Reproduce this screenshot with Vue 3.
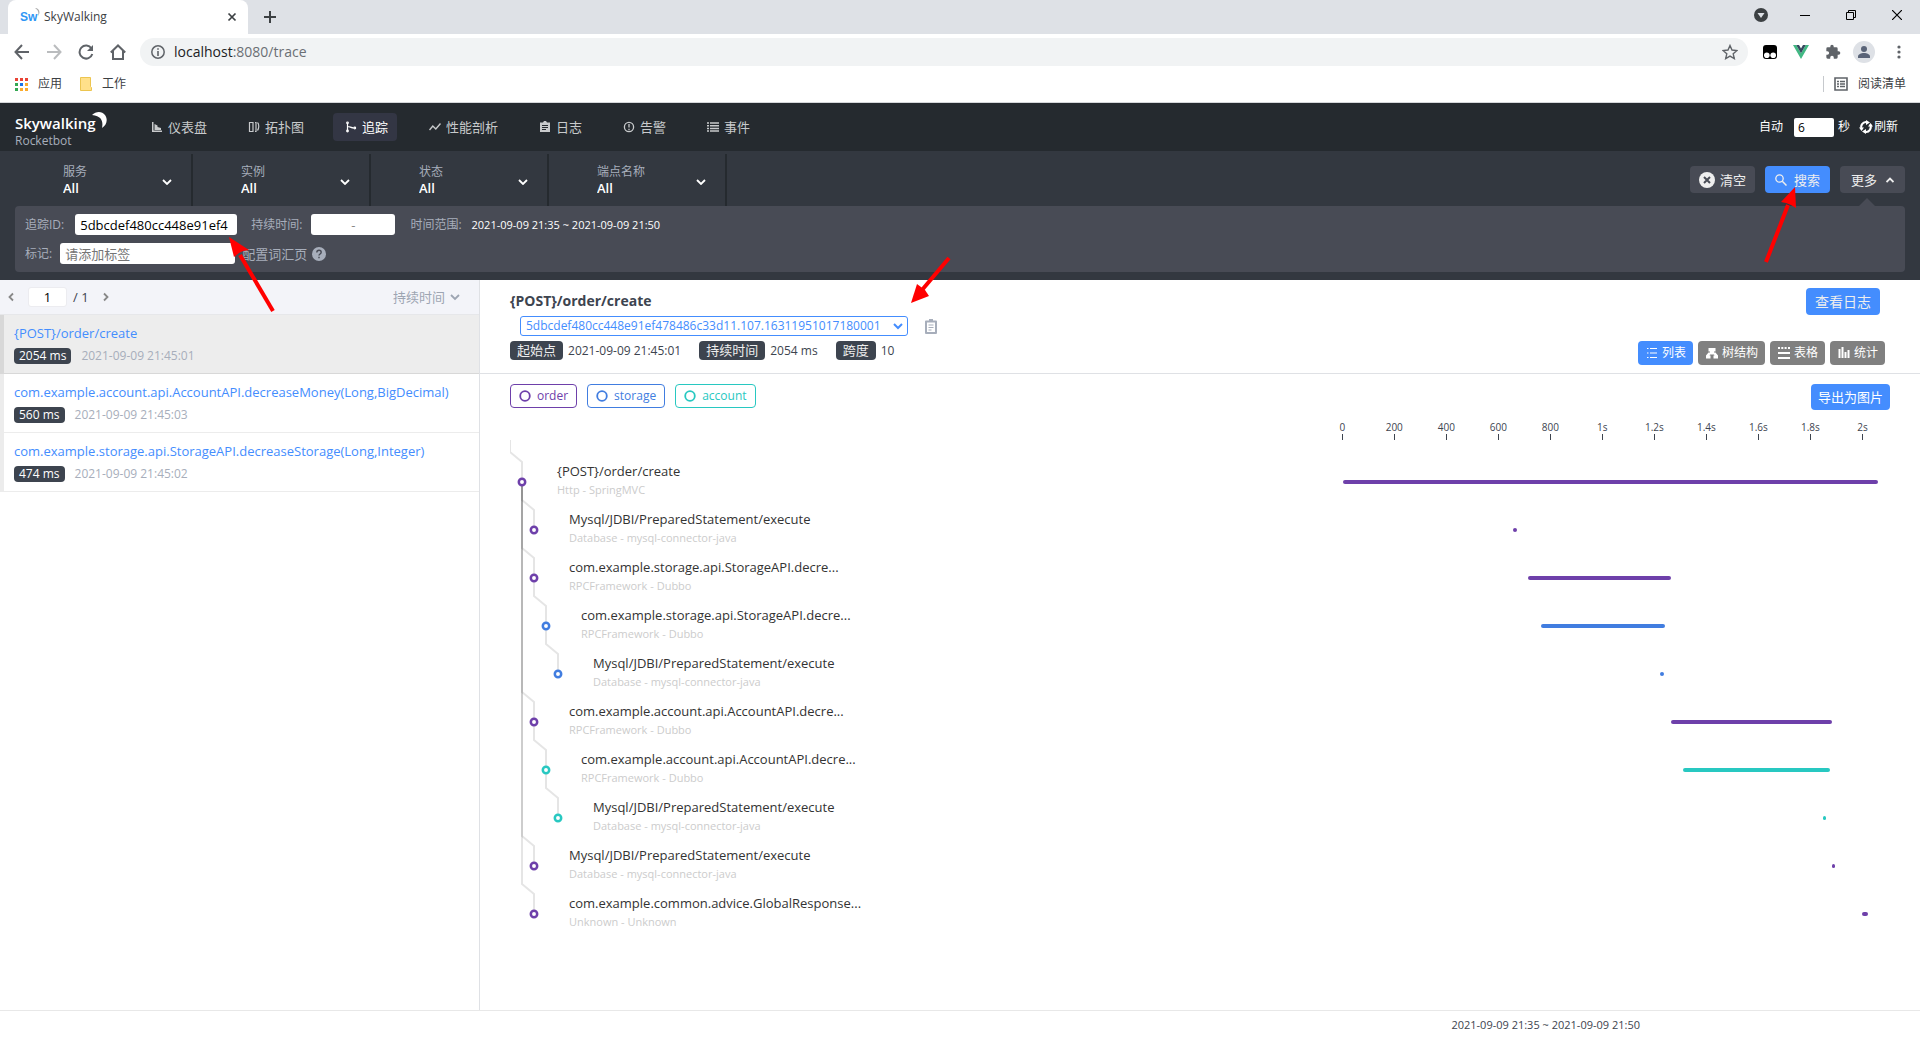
<script setup>
import { ref } from 'vue'

const navItems = [
  { label: '仪表盘', icon: 'chart' },
  { label: '拓扑图', icon: 'topology' },
  { label: '追踪', icon: 'trace', active: true },
  { label: '性能剖析', icon: 'profile' },
  { label: '日志', icon: 'log' },
  { label: '告警', icon: 'alarm' },
  { label: '事件', icon: 'event' },
]
const filters = [
  { id: 'service', label: '服务' },
  { id: 'instance', label: '实例' },
  { id: 'status', label: '状态' },
  { id: 'endpoint', label: '端点名称' },
]
const traces = [
  { name: '{POST}/order/create', ms: 2054, time: '2021-09-09 21:45:01', active: true },
  { name: 'com.example.account.api.AccountAPI.decreaseMoney(Long,BigDecimal)', ms: 560, time: '2021-09-09 21:45:03' },
  { name: 'com.example.storage.api.StorageAPI.decreaseStorage(Long,Integer)', ms: 474, time: '2021-09-09 21:45:02' },
]
const views = [
  { label: '列表', icon: 'list', active: true },
  { label: '树结构', icon: 'tree' },
  { label: '表格', icon: 'table' },
  { label: '统计', icon: 'stats' },
]
const colors = { order: '#6e40aa', storage: '#417de0', account: '#28c8c1' }
const total = 2058
const ticks = ['0', '200', '400', '600', '800', '1s', '1.2s', '1.4s', '1.6s', '1.8s', '2s']
// start and duration in milliseconds; parent is the index of the calling span
const spans = [
  { name: '{POST}/order/create', kind: 'Http - SpringMVC', depth: 0, parent: -1, service: 'order', start: 0, took: 2058 },
  { name: 'Mysql/JDBI/PreparedStatement/execute', kind: 'Database - mysql-connector-java', depth: 1, parent: 0, service: 'order', start: 654, took: 15 },
  { name: 'com.example.storage.api.StorageAPI.decre...', kind: 'RPCFramework - Dubbo', depth: 1, parent: 0, service: 'order', start: 712, took: 551 },
  { name: 'com.example.storage.api.StorageAPI.decre...', kind: 'RPCFramework - Dubbo', depth: 2, parent: 2, service: 'storage', start: 762, took: 477 },
  { name: 'Mysql/JDBI/PreparedStatement/execute', kind: 'Database - mysql-connector-java', depth: 3, parent: 3, service: 'storage', start: 1219, took: 15 },
  { name: 'com.example.account.api.AccountAPI.decre...', kind: 'RPCFramework - Dubbo', depth: 1, parent: 0, service: 'order', start: 1262, took: 620 },
  { name: 'com.example.account.api.AccountAPI.decre...', kind: 'RPCFramework - Dubbo', depth: 2, parent: 5, service: 'account', start: 1308, took: 565 },
  { name: 'Mysql/JDBI/PreparedStatement/execute', kind: 'Database - mysql-connector-java', depth: 3, parent: 6, service: 'account', start: 1846, took: 12 },
  { name: 'Mysql/JDBI/PreparedStatement/execute', kind: 'Database - mysql-connector-java', depth: 1, parent: 0, service: 'order', start: 1881, took: 11 },
  { name: 'com.example.common.advice.GlobalResponse...', kind: 'Unknown - Unknown', depth: 1, parent: 0, service: 'order', start: 1998, took: 22 },
]
const nodeX = (s) => 12 + s.depth * 12
const nodeY = (i) => 42 + i * 48
const edge = (s, i) => {
  const x = nodeX(s)
  const y = nodeY(i)
  const from = s.parent < 0 ? 0 : nodeY(s.parent)
  return `M${x - 12} ${from}V${y - 30}L${x} ${y - 20}V${y}`
}
const pct = (v) => (v / total) * 100 + '%'

const traceId = ref('5dbcdef480cc448e91ef478486c33d11.107.16311951017180001')
const seconds = ref('6')
const page = ref('1')
</script>

<template>
  <div class="window">
    <header class="chrome">
      <div class="tabstrip">
        <div class="tab">
          <span class="favicon">Sw<svg width="5" height="8" viewBox="0 0 5 8"><path d="M0 0c4 0 6 4 3 8 1-4 0-6-3-8z" fill="#aaa" /></svg></span>
          <span class="tab-title">SkyWalking</span>
          <button class="plain" aria-label="Close tab">
            <svg width="10" height="10" viewBox="0 0 10 10"><path d="M1.500 1.500l7 7M8.500 1.500l-7 7" stroke="#3c4043" stroke-width="1.700" /></svg>
          </button>
        </div>
        <button class="plain new-tab" aria-label="New tab">
          <svg width="14" height="14" viewBox="0 0 14 14"><path d="M7 1v12M1 7h12" stroke="#3c4043" stroke-width="2" /></svg>
        </button>
        <div class="win-controls">
          <svg width="14" height="14" viewBox="0 0 14 14"><circle cx="7" cy="7" r="7" fill="#3c4043" /><path d="M3.500 5h7L7 10z" fill="#dee1e6" /></svg>
          <svg width="10" height="10" viewBox="0 0 10 10"><path d="M0 5.500h10" stroke="#000" /></svg>
          <svg width="10" height="10" viewBox="0 0 10 10" fill="none" stroke="#000"><path d="M.5 2.500h7v7h-7zM2.500 2.500v-2h7v7h-2" /></svg>
          <svg width="10" height="10" viewBox="0 0 10 10"><path d="M0 0l10 10M10 0L0 10" stroke="#000" stroke-width="1.200" /></svg>
        </div>
      </div>
      <div class="toolbar">
        <div class="nav-buttons">
          <svg width="16" height="16" viewBox="0 0 16 16" fill="none" stroke="#5f6368" stroke-width="2"><path d="M15 8H2M8 1L1.500 8 8 15" /></svg>
          <svg width="16" height="16" viewBox="0 0 16 16" fill="none" stroke="#babcbe" stroke-width="2"><path d="M1 8h13M8 1l6.500 7L8 15" /></svg>
          <svg width="16" height="16" viewBox="0 0 16 16"><path d="M13.500 4.500A6.500 6.500 0 1 0 14.300 10" fill="none" stroke="#5f6368" stroke-width="2" /><path d="M15 1v6H9z" fill="#5f6368" /></svg>
          <svg width="16" height="16" viewBox="0 0 16 16" fill="none" stroke="#5f6368" stroke-width="2"><path d="M0.800 8.500L8 1.500l7.200 7M3 7v8h10V7" /></svg>
        </div>
        <div class="omnibox">
          <svg width="14" height="14" viewBox="0 0 14 14"><circle cx="7" cy="7" r="6.200" fill="none" stroke="#5f6368" stroke-width="1.500" /><path d="M7 6v5M7 3.200v1.600" stroke="#5f6368" stroke-width="1.600" /></svg>
          <span class="url"><b>localhost</b>:8080/trace</span>
          <svg width="16" height="16" viewBox="0 0 16 16"><path d="M8 1.500l2 4.500 5 .5-3.800 3.300 1.100 4.800L8 12.100l-4.300 2.500 1.100-4.800L1 6.500 6 6z" fill="none" stroke="#5f6368" stroke-width="1.400" /></svg>
        </div>
        <div class="extensions">
          <svg width="14" height="14" viewBox="0 0 14 14"><rect width="14" height="14" rx="3" /><circle cx="3.800" cy="10.200" r="2.800" fill="#fff" /><circle cx="10.200" cy="10.200" r="2.800" fill="#fff" /></svg>
          <svg width="16" height="14" viewBox="0 0 16 14"><path d="M0 0h3.200L8 8.300 12.800 0H16L8 14z" fill="#41b883" /><path d="M3.200 0H6l2 3.500L10 0h2.800L8 8.300z" fill="#35495e" /></svg>
          <svg width="16" height="16" viewBox="0 0 24 24"><path d="M20.500 11H19V7a2 2 0 0 0-2-2h-4V3.500a2.500 2.500 0 0 0-5 0V5H4a2 2 0 0 0-2 2v3.800h1.500a2.700 2.700 0 0 1 0 5.400H2V20a2 2 0 0 0 2 2h3.800v-1.500a2.700 2.700 0 0 1 5.400 0V22H17a2 2 0 0 0 2-2v-4h1.500a2.500 2.500 0 0 0 0-5z" fill="#5f6368" /></svg>
          <svg class="avatar" width="22" height="22" viewBox="0 0 22 22"><circle cx="11" cy="11" r="11" fill="#dee1e6" /><circle cx="11" cy="8" r="3" fill="#5a6478" /><path d="M5 17v-1.500c0-2.300 3-3.500 6-3.500s6 1.200 6 3.500V17z" fill="#5a6478" /></svg>
          <svg width="4" height="14" viewBox="0 0 4 14" fill="#5f6368"><circle cx="2" cy="2" r="1.600" /><circle cx="2" cy="7" r="1.600" /><circle cx="2" cy="12" r="1.600" /></svg>
        </div>
      </div>
      <div class="bookmarks">
        <svg width="13" height="13" viewBox="0 0 13 13"><path d="M0 0h3v3H0zM5 0h3v3H5zM10 0h3v3h-3z" fill="#e94335" /><path d="M0 5h3v3H0zM0 10h3v3H0z" fill="#34a853" /><path d="M5 5h3v3H5z" fill="#1a73e8" /><path d="M10 5h3v3h-3zM5 10h3v3H5zM10 10h3v3h-3z" fill="#fbab2c" /></svg>
        <a href="#">应用</a>
        <svg class="folder" width="12" height="14" viewBox="0 0 12 14"><path d="M.5.5h10v9l1 1v3H.5z" fill="#ffe08a" stroke="#ecc550" /></svg>
        <a href="#">工作</a>
        <span class="bookmark-sep"></span>
        <svg width="14" height="14" viewBox="0 0 14 14"><path d="M1 1h12v12H1z" fill="none" stroke="#5f6368" stroke-width="1.600" /><path d="M3 4.500h2M6 4.500h5M3 7h2M6 7h5M3 9.500h2M6 9.500h5" stroke="#5f6368" stroke-width="1.400" /></svg>
        <a href="#">阅读清单</a>
      </div>
    </header>

    <div class="app-header">
      <div class="brand">
        <span class="brand-name">Skywalking<svg class="moon" width="15" height="17" viewBox="0 0 15 17"><path d="M0 3C4-1 10-1 13 3c3 4 2 10-3 13 1-5 1-12-10-13z" fill="#fff" /></svg></span>
        <span class="brand-sub">Rocketbot</span>
      </div>
      <nav class="main-nav">
        <a v-for="n in navItems" :key="n.label" href="#" :class="{ active: n.active }">
          <svg width="12" height="12" viewBox="0 0 12 12" fill="none" stroke="currentColor">
            <path v-if="n.icon === 'chart'" d="M1 1v10h10V9.500H2.500V1zM3.500 9V3l3 1.500V6l3.500 1v2z" fill="currentColor" stroke="none" />
            <path v-else-if="n.icon === 'topology'" d="M1.500 1.500h3.500v9H1.500zM7 1.500h1v9H7M9.500 1.500c1.700 1.500 1.700 6 0 8" stroke-width="1.200" />
            <g v-else-if="n.icon === 'trace'" stroke-width="1.200"><path d="M2.500 2v8.500M3 5.500c2 0 3 1.500 6 1.500" /><circle cx="2.500" cy="1.800" r="0.800" /><circle cx="2.500" cy="10" r="0.800" /><circle cx="9.800" cy="7" r="0.800" /></g>
            <path v-else-if="n.icon === 'profile'" d="M.5 9l3.300-4 3 3 4.700-5.500" stroke-width="1.400" />
            <g v-else-if="n.icon === 'log'"><path d="M1 1.500h3L5 0h2l1 1.500h3V11H1z" fill="currentColor" stroke="none" /><path d="M3 4.500h6M3 6.500h6M3 8.500h4" stroke="#252a2f" /></g>
            <g v-else-if="n.icon === 'alarm'" stroke-width="1.300"><circle cx="6" cy="6" r="4.600" /><path d="M6 3v3.500M6 7.800v1.400" /></g>
            <path v-else d="M0 2h2M3 2h9M0 4.700h2M3 4.700h9M0 7.400h2M3 7.400h9M0 10h2M3 10h9" stroke-width="1.500" />
          </svg>
          {{ n.label }}
        </a>
      </nav>
      <div class="auto">
        <label for="auto-seconds">自动</label>
        <input id="auto-seconds" v-model="seconds" />
        <span class="unit">秒</span>
        <button class="plain refresh">
          <svg width="14" height="14" viewBox="0 0 14 14"><path d="M3 9.500A4.800 4.800 0 0 1 8 2.200M11 4.500a4.800 4.800 0 0 1-5 7.300" fill="none" stroke="#fff" stroke-width="2" /><path d="M7 0l4 2.500L7 5zM7 14l-4-2.500L7 9zM0 7.500h5l-2.500 3.500zM14 6.500H9L11.500 3z" fill="#fff" /></svg>刷新
        </button>
      </div>
    </div>

    <section class="conditions">
      <div class="filter-row">
        <div v-for="f in filters" :key="f.id" class="filter">
          <label :for="f.id">{{ f.label }}</label>
          <select :id="f.id"><option>All</option></select>
          <svg class="filter-chevron" width="10" height="6" viewBox="0 0 10 6"><path d="M1 1l4 4 4-4" fill="none" stroke="#fff" stroke-width="1.800" /></svg>
        </div>
        <div class="actions">
          <button>
            <svg width="16" height="16" viewBox="0 0 16 16"><circle cx="8" cy="8" r="8" fill="#eee" /><path d="M5 5l6 6M11 5l-6 6" stroke="#484b55" stroke-width="2" /></svg>清空
          </button>
          <div class="pointed">
            <button class="primary">
              <svg width="12" height="12" viewBox="0 0 12 12" fill="none" stroke="#eee"><circle cx="4.500" cy="4.500" r="3.700" stroke-width="1.300" /><path d="M7.300 7.300L11.500 11.500" stroke-width="1.500" /></svg>搜索
            </button>
            <svg class="arrow arrow-search" width="44" height="80" viewBox="0 0 44 80"><path d="M7 76L29 19" stroke="#f00" stroke-width="4" /><path d="M36 1L22 16l5 1 5 2 5 3z" fill="#f00" /></svg>
          </div>
          <div class="pointed">
            <button>更多<svg width="8" height="6" viewBox="0 0 8 6"><path d="M.5 5L4 1.500 7.500 5" fill="none" stroke="#eee" stroke-width="1.800" /></svg></button>
            <span class="notch"></span>
          </div>
        </div>
      </div>
      <div class="more-panel">
        <div class="more-row">
          <label for="trace-id">追踪ID:</label>
          <div class="pointed">
            <input id="trace-id" class="trace-id" value="5dbcdef480cc448e91ef4" />
            <svg class="arrow arrow-id" width="50" height="80" viewBox="0 0 50 80"><path d="M45 75L12 19" stroke="#f00" stroke-width="4" /><path d="M1 1l5 20 5-4 4-2 6-1z" fill="#f00" /></svg>
          </div>
          <label for="duration">持续时间:</label>
          <input id="duration" class="duration" value="-" />
          <span class="range-label">时间范围:</span>
          <span class="range">2021-09-09 21:35 ~ 2021-09-09 21:50</span>
        </div>
        <div class="more-row second">
          <label for="tags">标记:</label>
          <input id="tags" class="tags" placeholder="请添加标签" />
          <a href="#">配置词汇页</a>
          <svg width="14" height="14" viewBox="0 0 14 14"><circle cx="7" cy="7" r="7" fill="#a7aebb" /><path d="M4.800 5.500c0-3 4.400-2.800 4.400-.2C9.200 7 7 6.900 7 8.500M7 9.700v1.500" fill="none" stroke="#484b55" stroke-width="1.400" /></svg>
        </div>
      </div>
    </section>

    <main class="content">
      <aside class="trace-list">
        <div class="list-head">
          <button class="plain" aria-label="Previous page"><svg width="6" height="10" viewBox="0 0 6 10"><path d="M5 1.500L1.500 5 5 8.500" fill="none" stroke="#888" stroke-width="1.800" /></svg></button>
          <input v-model="page" aria-label="Page" />
          <span>/ 1</span>
          <button class="plain" aria-label="Next page"><svg width="6" height="10" viewBox="0 0 6 10"><path d="M1 1.500L4.500 5 1 8.500" fill="none" stroke="#888" stroke-width="1.800" /></svg></button>
          <select aria-label="Sort order"><option>持续时间</option></select>
          <svg class="sort-chevron" width="10" height="7" viewBox="0 0 10 7"><path d="M1 1l4 4 4-4" fill="none" stroke="#9da5b2" stroke-width="1.800" /></svg>
        </div>
        <div v-for="t in traces" :key="t.name" class="trace" :class="{ active: t.active }">
          <a href="#">{{ t.name }}</a>
          <div class="trace-meta"><span class="badge">{{ t.ms }} ms</span><time>{{ t.time }}</time></div>
        </div>
      </aside>

      <section class="detail">
        <div class="detail-head">
          <div class="detail-info">
            <h1>{POST}/order/create</h1>
            <div class="id-row">
              <div class="pointed">
                <select v-model="traceId" aria-label="Trace ID"><option>{{ traceId }}</option></select>
                <svg class="id-chevron" width="10" height="7" viewBox="0 0 10 7"><path d="M1 1l4 4 4-4" fill="none" stroke="#448dfe" stroke-width="2" /></svg>
                <svg class="arrow arrow-trace" width="44" height="50" viewBox="0 0 44 50"><path d="M41 2L14 34" stroke="#f00" stroke-width="4" /><path d="M3 47L9 28l4 3 4 3 4 6z" fill="#f00" /></svg>
              </div>
              <button class="plain" aria-label="Copy">
                <svg width="12" height="15" viewBox="0 0 12 15"><path d="M1 2.500h10v11.500H1z" fill="none" stroke="#a7aebb" stroke-width="2" stroke-linejoin="round" /><path d="M4 0h4v3H4z" fill="#a7aebb" /><path d="M3.500 6h5M3.500 8.500h5M3.500 11h3" stroke="#a7aebb" /></svg>
              </button>
            </div>
            <div class="facts">
              <span class="fact">起始点</span><span class="value">2021-09-09 21:45:01</span>
              <span class="fact">持续时间</span><span class="value">2054 ms</span>
              <span class="fact">跨度</span><span class="value">10</span>
            </div>
          </div>
          <div class="detail-actions">
            <button class="view-log">查看日志</button>
            <div class="views">
              <button v-for="v in views" :key="v.label" :class="{ active: v.active }">
                <svg width="12" height="12" viewBox="0 0 12 12" fill="none" stroke="currentColor">
                  <path v-if="v.icon === 'list'" d="M1 1.500h1.500M4 1.500h7M1 6h1.500M4 6h7M1 10.500h1.500M4 10.500h7" />
                  <path v-else-if="v.icon === 'tree'" d="M2.500 1h7v3.500H8V5.500h1.500L12 8.500V11.500H7.500V8.500h1L8 7.500H4L3.500 8.500h1v3H0V8.500l2.500-3H4V4.500H2.500z" fill="currentColor" stroke="none" />
                  <path v-else-if="v.icon === 'table'" d="M0 1h2M3.300 1h2M6.600 1h2M10 1h2M0 6h12M0 11h12" stroke-width="2" />
                  <path v-else d="M1.500 2v9M4.500 0v11M7.500 5v6M10.500 3v8" stroke-width="2" />
                </svg>{{ v.label }}
              </button>
            </div>
          </div>
        </div>

        <div class="legend">
          <span v-for="(c, name) in colors" :key="name" class="chip" :class="name">
            <svg width="12" height="12" viewBox="0 0 12 12"><circle cx="6" cy="6" r="4.800" fill="none" stroke="currentColor" stroke-width="1.800" /></svg>{{ name }}
          </span>
          <button class="export">导出为图片</button>
        </div>

        <div class="chart">
          <div class="axis">
            <ol><li v-for="t in ticks" :key="t">{{ t }}</li></ol>
          </div>
          <div class="tree">
            <svg class="edges" width="80" height="500" viewBox="0 0 80 500">
              <path v-for="(s, i) in spans" :key="i" :d="edge(s, i)" fill="none" stroke="#000" stroke-opacity="0.100" stroke-width="2" />
              <circle v-for="(s, i) in spans" :key="'n' + i" :cx="nodeX(s)" :cy="nodeY(i)" r="3.200" fill="#fff" :stroke="colors[s.service]" stroke-width="2.500" />
            </svg>
            <div v-for="(s, i) in spans" :key="i" class="span-row">
              <div class="span-label" :class="'depth-' + s.depth">
                <span class="span-name">{{ s.name }}</span>
                <span class="span-kind">{{ s.kind }}</span>
              </div>
              <div class="span-track">
                <div class="bar" :class="s.service" :style="{ marginLeft: pct(s.start), width: pct(s.took) }"></div>
              </div>
            </div>
          </div>
        </div>
      </section>
    </main>

    <footer class="footer">2021-09-09 21:35 ~ 2021-09-09 21:50</footer>
  </div>
</template>

<style>
body {
  margin: 0;
}
</style>

<style scoped>
* {
  box-sizing: border-box;
}
.window {
  display: flex;
  flex-direction: column;
  min-height: 100vh;
  background: #fff;
  color: #3d444f;
  font-family: "Open Sans", "Noto Sans CJK SC", sans-serif;
  font-size: 13px;
  line-height: 18px;
}
svg {
  display: block;
  flex: none;
}
button,
input,
select {
  font: inherit;
  color: inherit;
  border: 0;
  margin: 0;
  outline: 0;
}
select {
  appearance: none;
  background: transparent;
  padding: 0;
}
a {
  color: inherit;
  text-decoration: none;
}
.plain {
  background: none;
  padding: 0;
}
.pointed {
  position: relative;
  display: flex;
}
.arrow {
  position: absolute;
  z-index: 5;
  pointer-events: none;
}

/* browser frame */
.chrome {
  border-bottom: 1px solid #d5d7da;
  font-size: 12px;
  color: #3c4043;
}
.tabstrip {
  display: flex;
  align-items: center;
  height: 34px;
  padding: 0 18px 0 8px;
  background: #dee1e6;
}
.tab {
  display: flex;
  align-items: center;
  width: 240px;
  height: 34px;
  padding: 0 11px 0 12px;
  border-radius: 8px 8px 0 0;
  background: #fff;
}
.favicon {
  display: flex;
  width: 16px;
  color: #2e96f5;
  font-family: "Liberation Sans Narrow", "Liberation Sans", sans-serif;
  font-weight: 700;
  font-size: 12px;
}
.favicon svg {
  margin-left: -2px;
}
.tab-title {
  flex: 1;
  padding-left: 8px;
}
.new-tab {
  margin-left: 15px;
}
.win-controls {
  display: flex;
  align-items: center;
  gap: 36px;
  margin-left: auto;
  padding-bottom: 4px;
}
.win-controls svg:first-child {
  margin-right: -4px;
}
.toolbar {
  display: flex;
  align-items: center;
  height: 36px;
  padding: 0 19px 0 14px;
}
.nav-buttons {
  display: flex;
  gap: 16px;
  margin-right: 14px;
}
.omnibox {
  display: flex;
  flex: 1;
  align-items: center;
  gap: 9px;
  height: 28px;
  padding: 0 10px 0 11px;
  border-radius: 14px;
  background: #f1f3f4;
}
.url {
  flex: 1;
  font-size: 14px;
  color: #6b6f74;
}
.url b {
  font-weight: 400;
  color: #202124;
}
.extensions {
  display: flex;
  align-items: center;
  gap: 16px;
  margin-left: 15px;
}
.avatar {
  margin-left: -4px;
}
.extensions svg:last-child {
  margin-left: 6px;
}
.bookmarks {
  display: flex;
  align-items: center;
  gap: 10px;
  height: 32px;
  padding: 0 14px 4px 15px;
}
.folder {
  margin-left: 8px;
}
.bookmark-sep {
  width: 1px;
  height: 16px;
  margin-left: auto;
  background: #c6c9cd;
}

/* application header */
.app-header {
  display: flex;
  align-items: center;
  height: 48px;
  padding: 0 22px 0 15px;
  background: #252a2f;
  color: #fff;
}
.brand {
  width: 124px;
  padding-top: 6px;
}
.brand-name {
  display: flex;
  line-height: 22px;
  color: #fff;
  font-size: 15px;
  font-weight: 600;
}
.moon {
  margin-left: -4px;
}
.brand-sub {
  display: block;
  line-height: 14px;
  font-size: 12px;
  color: #a7aebb;
}
.main-nav {
  display: flex;
  gap: 20px;
}
.main-nav a {
  display: flex;
  align-items: center;
  gap: 5px;
  height: 28px;
  padding: 0 9px 0 12px;
  border-radius: 4px;
  color: #c8cacc;
}
.main-nav a.active {
  background: #333644;
  color: #fff;
}
.auto {
  display: flex;
  align-items: center;
  margin-left: auto;
  font-size: 12px;
}
.auto input {
  width: 40px;
  height: 19px;
  margin: 0 4px 0 11px;
  padding: 0 4px;
  border-radius: 2px;
  background: #fff;
  color: #000;
}
.refresh {
  display: flex;
  align-items: center;
  margin-left: 9px;
  gap: 1px;
}

/* search conditions */
.conditions {
  padding: 3px 15px 8px;
  background: #333840;
  color: #a7aebb;
}
.filter-row {
  display: flex;
}
.filter {
  position: relative;
  display: flex;
  flex-direction: column;
  justify-content: center;
  width: 178px;
  height: 52px;
  padding: 0 12px 0 48px;
  border-right: 2px solid #252a2f;
}
.filter label {
  line-height: 16px;
  font-size: 12px;
}
.filter select {
  height: 16px;
  line-height: 16px;
  font-weight: 600;
  color: #fff;
}
.filter-chevron {
  position: absolute;
  right: 19px;
  top: 25px;
}
.actions {
  display: flex;
  align-items: flex-start;
  gap: 10px;
  margin-left: auto;
  padding-top: 12px;
}
.actions button {
  display: flex;
  align-items: center;
  justify-content: center;
  gap: 5px;
  width: 65px;
  height: 27px;
  padding: 0;
  border-radius: 4px;
  background: #484b55;
  color: #eee;
}
.actions button.primary {
  gap: 7px;
  background: #448dfe;
}
.actions .pointed:last-child button {
  gap: 9px;
}
.arrow-search {
  left: -6px;
  top: 20px;
}
.notch {
  position: absolute;
  left: 19px;
  top: 32px;
  border: 8px solid transparent;
  border-top: 0;
  border-bottom-color: #484b55;
}
.more-panel {
  padding: 8px 10px;
  border-radius: 4px;
  background: #484b55;
}
.more-row {
  display: flex;
  align-items: center;
  font-size: 12px;
}
.more-row.second {
  margin-top: 8px;
}
.more-row input {
  height: 21px;
  padding: 0 5px;
  border-radius: 3px;
  background: #fff;
  color: #000;
  font-size: 13px;
}
.more-row .trace-id {
  width: 162px;
  margin: 0 14px 0 11px;
}
.more-row .duration {
  width: 84px;
  margin: 0 15px 0 9px;
  text-align: center;
  color: #888;
}
.more-row .tags {
  width: 175px;
  margin: 0 7px 0 8px;
}
.tags::placeholder {
  color: #757575;
}
.more-row a {
  margin-right: 5px;
  font-size: 13px;
}
.range {
  margin-left: 10px;
  font-size: 11px;
  color: #fff;
}
.arrow-id {
  left: 164px;
  top: 22px;
}

/* trace list */
.content {
  display: flex;
  flex: 1;
}
.trace-list {
  width: 25%;
  border-right: 1px solid #dfe1e5;
}
.list-head {
  display: flex;
  align-items: center;
  height: 35px;
  padding: 0 19px 0 8px;
  border-bottom: 1px solid #e6e7ea;
  background: #f3f4f9;
}
.list-head input {
  width: 39px;
  height: 20px;
  margin: 0 6px 0 14px;
  border: 1px solid #ececf0;
  border-radius: 3px;
  background: #fff;
  text-align: center;
  padding: 0;
  color: #000;
}
.list-head span {
  margin-right: 14px;
}
.list-head select {
  margin-left: auto;
  color: #9da5b2;
}
.sort-chevron {
  margin-left: 4px;
}
.trace {
  height: 59px;
  padding: 9px 10px 0;
  border-left: 4px solid #ececec;
  border-bottom: 1px solid #ececec;
}
.trace.active {
  border-left-color: #d8d8d8;
  border-bottom-color: #d8d8d8;
  background: #ededed;
}
.trace a {
  display: block;
  white-space: nowrap;
  color: #448dfe;
}
.trace-meta {
  display: flex;
  align-items: center;
  gap: 10px;
  margin-top: 6px;
  font-size: 12px;
  line-height: 16px;
  color: #a7aebb;
}
.badge {
  padding: 0 5px;
  border-radius: 4px;
  background: #3d444f;
  color: #fff;
}

/* trace detail */
.detail {
  flex: 1;
  min-width: 0;
}
.detail-head {
  display: flex;
  justify-content: space-between;
  height: 94px;
  padding: 8px 35px 0 30px;
  border-bottom: 1px solid #dfe1e5;
}
h1 {
  margin: 2px 0 4px;
  font-size: 14px;
  line-height: 22px;
  font-weight: 700;
}
.id-row {
  display: flex;
  align-items: center;
  gap: 17px;
  margin-left: 10px;
}
.id-row select {
  width: 388px;
  height: 20px;
  padding: 0 18px 0 5px;
  border: 1px solid #448dfe;
  border-radius: 3px;
  font-size: 12px;
  color: #448dfe;
}
.id-chevron {
  position: absolute;
  right: 5px;
  top: 7px;
}
.arrow-trace {
  left: 388px;
  top: -60px;
}
.facts {
  display: flex;
  align-items: center;
  margin-top: 5px;
}
.fact {
  padding: 0 7px;
  border-radius: 4px;
  background: #3d444f;
  color: #eee;
  line-height: 19px;
}
.value {
  margin: 0 18px 0 5px;
  font-size: 12px;
}
.detail-actions {
  display: flex;
  flex-direction: column;
  align-items: flex-end;
  gap: 26px;
}
.view-log {
  height: 27px;
  margin-right: 5px;
  padding: 0 9px;
  border-radius: 4px;
  background: #448dfe;
  color: #eee;
  font-size: 14px;
}
.views {
  display: flex;
  gap: 5px;
}
.views button {
  display: flex;
  align-items: center;
  gap: 4px;
  height: 24px;
  padding: 0 7px 0 8px;
  border-radius: 4px;
  background: #808080;
  color: #fff;
  font-size: 12px;
}
.views button.active {
  background: #448dfe;
}
.legend {
  display: flex;
  align-items: flex-start;
  gap: 10px;
  height: 36px;
  padding: 10px 30px 0;
}
.chip {
  display: flex;
  align-items: center;
  gap: 6px;
  height: 24px;
  padding: 0 8px;
  border: 1px solid currentColor;
  border-radius: 4px;
  font-size: 12px;
}
.chip.order {
  color: #6e40aa;
}
.chip.storage {
  color: #417de0;
}
.chip.account {
  color: #28c8c1;
}
.export {
  height: 26px;
  margin-left: auto;
  padding: 0 7px;
  border-radius: 4px;
  background: #448dfe;
  color: #fff;
}
.chart {
  padding: 10px 42px 20px 30px;
}
.axis,
.span-row {
  display: grid;
  grid-template-columns: 833fr 535fr;
}
.axis ol {
  grid-column: 2;
  display: flex;
  margin: 0 0 0 -5%;
  padding: 0;
  list-style: none;
  font-size: 10px;
  line-height: 14px;
}
.axis li {
  flex: 0 0 9.26%;
  text-align: center;
}
.axis li::after {
  content: "";
  display: block;
  width: 1px;
  height: 6px;
  margin: 0 auto;
  background: #3d444f;
}
.tree {
  position: relative;
  padding-top: 18px;
}
.edges {
  position: absolute;
  left: 0;
  top: 0;
}
.span-row {
  height: 48px;
  align-items: center;
}
.span-label {
  display: flex;
  flex-direction: column;
  padding: 0 0 5px 47px;
  color: #333;
}
.depth-1 {
  padding-left: 59px;
}
.depth-2 {
  padding-left: 71px;
}
.depth-3 {
  padding-left: 83px;
}
.span-name {
  line-height: 20px;
}
.span-kind {
  font-size: 11px;
  line-height: 18px;
  color: #ccc;
}
.bar {
  height: 4px;
  border-radius: 2px;
}
.bar.order {
  background: #6e40aa;
}
.bar.storage {
  background: #417de0;
}
.bar.account {
  background: #28c8c1;
}
.footer {
  height: 30px;
  padding: 5px 280px 0 0;
  border-top: 1px solid #e8e8e8;
  text-align: right;
  font-size: 11px;
}
</style>
